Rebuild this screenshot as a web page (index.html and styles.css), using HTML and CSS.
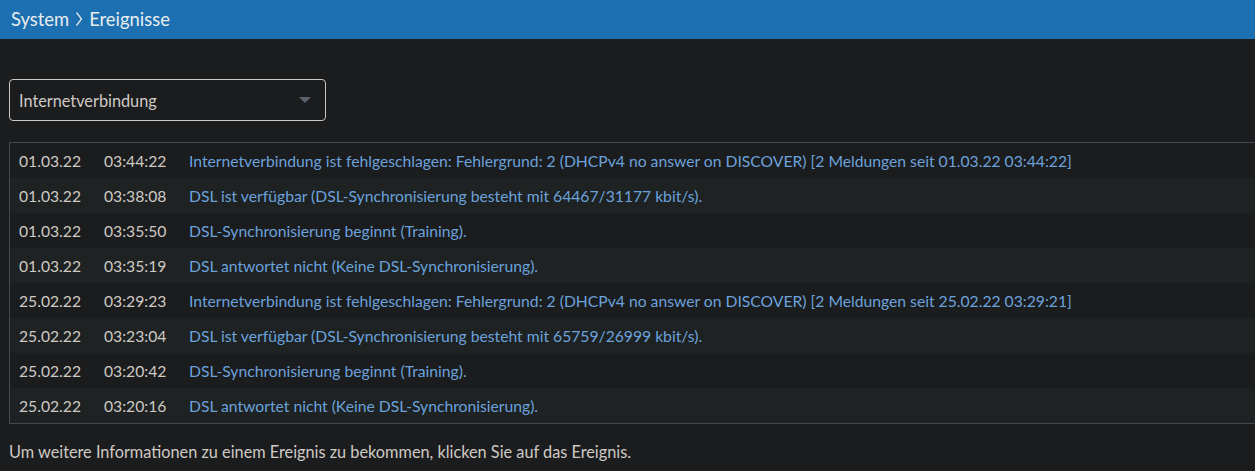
FILE: index.html
```html
<!DOCTYPE html>
<html lang="de">
<head>
<meta charset="utf-8">
<title>Ereignisse</title>
<link rel="stylesheet" href="styles.css">
</head>
<body>
<header class="topbar">
  <span class="crumb">System</span>
  <svg class="chev" width="8" height="16" viewBox="0 0 8 16"><polyline points="1.5,1.5 6.5,8 1.5,14.5" fill="none" stroke="#e6e6e6" stroke-width="1.3"/></svg>
  <span class="crumb">Ereignisse</span>
</header>
<main class="content">
  <div class="select">
    <span class="select-label">Internetverbindung</span>
    <span class="caret"></span>
  </div>
  <div class="events">
    <div class="row"><span class="date">01.03.22</span><span class="time">03:44:22</span><span class="msg">Internetverbindung ist fehlgeschlagen: Fehlergrund: 2 (DHCPv4 no answer on DISCOVER) [2 Meldungen seit 01.03.22 03:44:22]</span></div>
    <div class="row"><span class="date">01.03.22</span><span class="time">03:38:08</span><span class="msg">DSL ist verfügbar (DSL-Synchronisierung besteht mit 64467/31177 kbit/s).</span></div>
    <div class="row"><span class="date">01.03.22</span><span class="time">03:35:50</span><span class="msg">DSL-Synchronisierung beginnt (Training).</span></div>
    <div class="row"><span class="date">01.03.22</span><span class="time">03:35:19</span><span class="msg">DSL antwortet nicht (Keine DSL-Synchronisierung).</span></div>
    <div class="row"><span class="date">25.02.22</span><span class="time">03:29:23</span><span class="msg">Internetverbindung ist fehlgeschlagen: Fehlergrund: 2 (DHCPv4 no answer on DISCOVER) [2 Meldungen seit 25.02.22 03:29:21]</span></div>
    <div class="row"><span class="date">25.02.22</span><span class="time">03:23:04</span><span class="msg">DSL ist verfügbar (DSL-Synchronisierung besteht mit 65759/26999 kbit/s).</span></div>
    <div class="row"><span class="date">25.02.22</span><span class="time">03:20:42</span><span class="msg">DSL-Synchronisierung beginnt (Training).</span></div>
    <div class="row"><span class="date">25.02.22</span><span class="time">03:20:16</span><span class="msg">DSL antwortet nicht (Keine DSL-Synchronisierung).</span></div>
  </div>
  <p class="hint">Um weitere Informationen zu einem Ereignis zu bekommen, klicken Sie auf das Ereignis.</p>
</main>
</body>
</html>
```
FILE: styles.css
```css
html, body {
  margin: 0;
  padding: 0;
  background: #1b1c1e;
  font-family: Lato, "Noto Sans", sans-serif;
  color: #cfcac4;
  overflow: hidden;
}
.topbar {
  height: 39px;
  background: #1c6fb0;
  display: flex;
  align-items: center;
  gap: 5px;
  padding: 0 11px 1px;
  box-sizing: border-box;
  color: #e8ecef;
  font-size: 18.4px;
}
.chev { margin: 0 1px; }
.content {
  padding: 40px 0 0 9px;
}
.select {
  width: 317px;
  height: 42px;
  box-sizing: border-box;
  border: 1px solid #cbc6c0;
  border-radius: 4px;
  display: flex;
  align-items: center;
  justify-content: space-between;
  padding: 0 14px 0 9px;
  font-size: 16.3px;
  color: #cfcac4;
}
.caret {
  width: 0;
  height: 0;
  border-left: 6px solid transparent;
  border-right: 6px solid transparent;
  border-top: 6px solid #5b636c;
}
.events {
  margin-top: 21px;
  border: 1px solid #46484b;
  border-right: none;
  font-size: 15.7px;
}
.row {
  height: 35px;
  display: flex;
  align-items: center;
  padding-left: 9px;
  white-space: nowrap;
}
.row:nth-child(even) { background: #1e2223; }
.date { width: 85px; }
.time { width: 85px; }
.msg { color: #6ba2dc; }
.hint {
  margin: 18px 0 0;
  font-size: 16.3px;
}
```
